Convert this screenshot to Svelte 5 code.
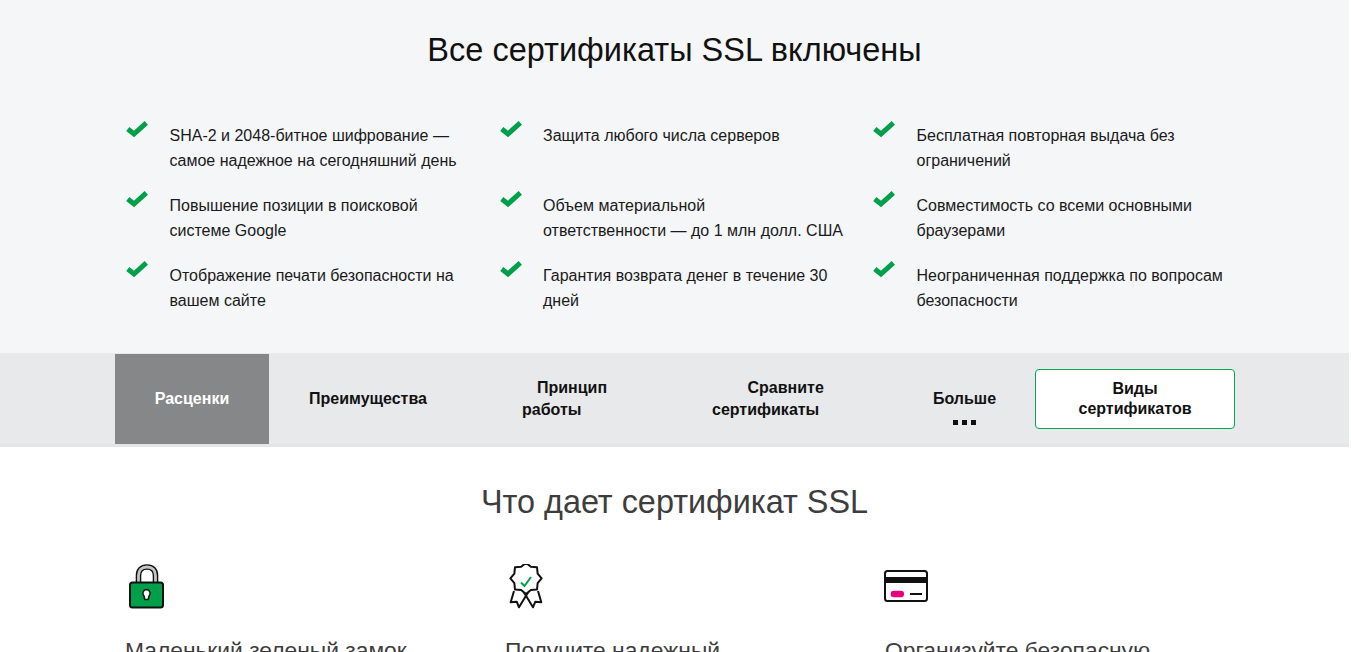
<script>
  const features = [
    ['SHA-2 и 2048-битное шифрование —', 'самое надежное на сегодняшний день'],
    ['Защита любого числа серверов'],
    ['Бесплатная повторная выдача без', 'ограничений'],
    ['Повышение позиции в поисковой', 'системе Google'],
    ['Объем материальной', 'ответственности — до 1 млн долл. США'],
    ['Совместимость со всеми основными', 'браузерами'],
    ['Отображение печати безопасности на', 'вашем сайте'],
    ['Гарантия возврата денег в течение 30', 'дней'],
    ['Неограниченная поддержка по вопросам', 'безопасности']
  ];
  const badge = Array.from({ length: 16 }, (_, i) => {
    const r = i % 2 ? 12.6 : 15.6;
    const a = (i * Math.PI) / 8 - Math.PI / 2;
    return `${(21 + r * Math.cos(a)).toFixed(2)},${(14.4 + r * Math.sin(a)).toFixed(2)}`;
  }).join(' ');
</script>

<div class="page">
  <section class="top">
    <h1>Все сертификаты SSL включены</h1>
    <div class="features">
      {#each features as lines}
        <div class="feature">
          <svg class="check" width="24" height="18" viewBox="0 0 24 18" aria-hidden="true">
            <path d="M2.800 9 L9 14 L21.300 2.800" fill="none" stroke="#00a04a" stroke-width="5" />
          </svg>
          <p>{#each lines as line}<span>{line}</span>{/each}</p>
        </div>
      {/each}
    </div>
  </section>

  <nav class="tabs">
    <div class="tabs-inner">
      <div class="tab active">Расценки</div>
      <div class="tab t2">Преимущества</div>
      <div class="tab t3"><span>Принцип</span><span class="left">работы</span></div>
      <div class="tab t4"><span class="right">Сравните</span><span>сертификаты</span></div>
      <div class="tab more"><span>Больше</span><i class="dots"><b></b><b></b><b></b></i></div>
      <div class="cta">Виды<br />сертификатов</div>
    </div>
  </nav>

  <section class="benefits">
    <h2>Что дает сертификат SSL</h2>
    <div class="cols">
      <div class="col">
        <svg class="ic" width="46" height="46" viewBox="0 0 46 46" aria-hidden="true">
          <path d="M13.500 19 V11.500 C13.500 6 16.500 3 22 3 C27.500 3 30.500 6 30.500 11.500 V19" fill="none" stroke="#111" stroke-width="5.600" />
          <path d="M13.500 19 V11.500 C13.500 6 16.500 3 22 3 C27.500 3 30.500 6 30.500 11.500 V19" fill="none" stroke="#c4c4c4" stroke-width="2.800" />
          <rect x="5" y="18.500" width="33" height="25" rx="2.500" fill="#00a04a" stroke="#111" stroke-width="2" />
          <path d="M21.500 25.500 a3.800 3.800 0 0 1 2.500 6.500 L23.200 35.500 H19.800 L19 32 A3.800 3.800 0 0 1 21.500 25.500 Z" fill="#fff" stroke="#111" stroke-width="1.500" />
        </svg>
        <h3>Маленький зеленый замок</h3>
      </div>
      <div class="col">
        <svg class="ic" width="46" height="46" viewBox="0 0 46 46" aria-hidden="true">
          <path d="M9 27 L5.700 38.300 L11.700 37.700 L14 43.300 L24.500 26" fill="none" stroke="#111" stroke-width="2" stroke-linejoin="round" />
          <path d="M33 27 L36.300 38.300 L30.300 37.700 L28 43.300 L17.500 26" fill="none" stroke="#111" stroke-width="2" stroke-linejoin="round" />
          <polygon points={badge} fill="#fff" stroke="#111" stroke-width="2" stroke-linejoin="round" />
          <path d="M16 18.500 L19.500 22 L26 13" fill="none" stroke="#00a04a" stroke-width="2" />
        </svg>
        <h3>Получите надежный</h3>
      </div>
      <div class="col card">
        <svg class="ic" width="46" height="46" viewBox="0 0 46 46" aria-hidden="true">
          <rect x="1" y="7" width="42" height="30" rx="2.500" fill="#fff" stroke="#111" stroke-width="2" />
          <rect x="1" y="13" width="42" height="6" fill="#111" />
          <rect x="6.700" y="26.700" width="13.300" height="6.600" rx="3" fill="#e6007e" />
          <rect x="26" y="29" width="12" height="2" fill="#111" />
        </svg>
        <h3>Организуйте безопасную</h3>
      </div>
    </div>
  </section>
</div>

<style>
  :global(html), :global(body) { margin: 0; overflow: hidden; background: #fff; }
  .page {
    width: 1349px;
    height: 652px;
    overflow: hidden;
    font-family: "Liberation Sans", Arial, sans-serif;
    color: #111;
  }
  .top {
    background: #f5f6f8;
    height: 353px;
    box-sizing: border-box;
    padding-top: 30px;
  }
  h1 {
    margin: 0;
    text-align: center;
    font-weight: 400;
    font-size: 32.500px;
    line-height: 40px;
  }
  .features {
    margin: 50px 0 0 125px;
    display: grid;
    grid-template-columns: repeat(3, 373.500px);
    grid-auto-rows: 70px;
  }
  .feature { display: flex; }
  .check { width: 24px; flex: none; }
  .feature p {
    margin: 3px 0 0 20.500px;
    font-size: 16px;
    line-height: 25px;
    color: #1a1a1a;
  }
  .feature span { display: block; white-space: nowrap; }
  .tabs {
    background: #e8e9eb;
    height: 94px;
    box-sizing: border-box;
    border-top: 1px solid #e8e9eb;
    border-bottom: 3px solid #e4e5e7;
  }
  .tabs-inner {
    margin-left: 115px;
    width: 1120px;
    height: 90px;
    display: flex;
    align-items: center;
    font-weight: 700;
    font-size: 16px;
    line-height: 22px;
    color: #111;
  }
  .tab {
    display: flex;
    flex-direction: column;
    justify-content: center;
    height: 90px;
    box-sizing: border-box;
    flex: none;
  }
  .active {
    width: 154px;
    background: #868788;
    color: #fff;
    align-items: center;
  }
  .t2 { width: 214px; padding-left: 40px; }
  .t3 { width: 229px; padding-left: 39px; align-items: flex-start; }
  .t3 span:first-child { margin-left: 15px; }
  .t4 { width: 182px; align-items: flex-start; }
  .t4 .right { margin-left: 35.500px; }
  .more { width: 141px; align-items: center; padding-top: 15px; }
  .dots { display: flex; gap: 4px; margin-top: 10px; height: 5px; }
  .dots b { display: block; width: 5px; height: 5px; background: #111; }
  .cta {
    flex: none;
    box-sizing: border-box;
    width: 200px;
    height: 60px;
    background: #fff;
    border: 1px solid #00a651;
    border-radius: 4px;
    text-align: center;
    line-height: 20px;
    padding-top: 9px;
  }
  .benefits { background: #fff; }
  h2 {
    margin: 35px 0 0;
    text-align: center;
    font-weight: 400;
    font-size: 32.400px;
    line-height: 40px;
    color: #3d3d3d;
  }
  .cols {
    margin: 0 0 0 125px;
    display: grid;
    grid-template-columns: repeat(3, 380px);
  }
  .col { padding-top: 42px; }
  .card .ic { margin-left: -1px; }
  .ic { display: block; }
  h3 {
    margin: 25px 0 0;
    font-weight: 400;
    font-size: 22.800px;
    line-height: 30px;
    color: #3d3d3d;
    white-space: nowrap;
  }
</style>
